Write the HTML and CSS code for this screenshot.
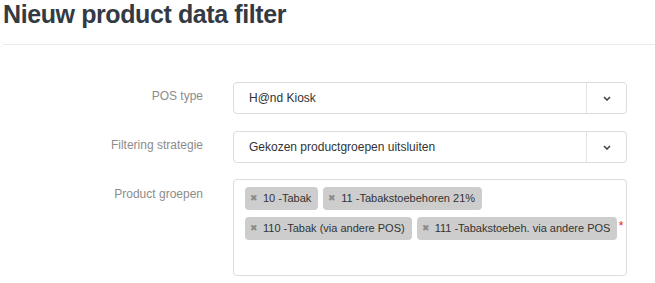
FILE: index.html
```html
<!DOCTYPE html>
<html lang="nl">

<head>
    <meta charset="UTF-8">
    <meta name="viewport" content="width=device-width, initial-scale=1.0">
    <title>Nieuw product data filter</title>
    <link rel="stylesheet" href="styles.css">
</head>

<body>
    <h1 class="page-title">Nieuw product data filter</h1>

    <form class="filter-form">
        <label class="form-label">POS type</label>
        <div class="select-box">
            <span class="select-value">H@nd Kiosk</span>
            <span class="select-toggle">
                <svg width="8" height="5" viewBox="0 0 8 5"><path d="M1 1 L4 4 L7 1" fill="none" stroke="#444" stroke-width="1.6"/></svg>
            </span>
        </div>

        <label class="form-label">Filtering strategie</label>
        <div class="select-box">
            <span class="select-value">Gekozen productgroepen uitsluiten</span>
            <span class="select-toggle">
                <svg width="8" height="5" viewBox="0 0 8 5"><path d="M1 1 L4 4 L7 1" fill="none" stroke="#444" stroke-width="1.6"/></svg>
            </span>
        </div>

        <label class="form-label">Product groepen</label>
        <div class="tag-box">
            <span class="tag"><span class="tag-remove">&#x2716;</span>10 -Tabak</span>
            <span class="tag"><span class="tag-remove">&#x2716;</span>11 -Tabakstoebehoren 21%</span>
            <span class="tag"><span class="tag-remove">&#x2716;</span>110 -Tabak (via andere POS)</span>
            <span class="tag required"><span class="tag-remove">&#x2716;</span>111 -Tabakstoebeh. via andere POS</span>
        </div>
    </form>
</body>

</html>
```
FILE: styles.css
```css
/* General */

body {
    margin: 0;
    font-family: 'Liberation Sans', Arial, sans-serif;
    color: #333;
    background: #ffffff;
}

/* Title */

.page-title {
    margin: 0 0 0 3px;
    padding: 2px 0 17px;
    font-size: 25px;
    line-height: 25px;
    letter-spacing: -0.4px;
    font-weight: bold;
    color: #343a44;
    border-bottom: 1px solid #eaeaea;
}

/* Form grid */

.filter-form {
    display: grid;
    grid-template-columns: 200px 394px;
    column-gap: 30px;
    row-gap: 17px;
    padding: 37px 0 0 3px;
}

.form-label {
    text-align: right;
    font-size: 12px;
    line-height: 17px;
    padding-top: 6px;
    color: #8c8c8c;
}

/* Select */

.select-box {
    display: flex;
    height: 32px;
    box-sizing: border-box;
    border: 1px solid #dcdcdc;
    border-radius: 4px;
}

.select-value {
    flex: 1;
    padding-left: 15px;
    font-size: 12px;
    line-height: 30px;
    color: #333;
}

.select-toggle {
    width: 39px;
    display: flex;
    align-items: center;
    justify-content: center;
    border-left: 1px solid #e3e3e3;
}

/* Tags */

.tag-box {
    display: flex;
    flex-wrap: wrap;
    align-content: flex-start;
    gap: 7px 5px;
    min-height: 97px;
    box-sizing: border-box;
    padding: 7px 6px 7px 11px;
    border: 1px solid #dcdcdc;
    border-radius: 4px;
    margin-top: -1px;
}

.tag {
    position: relative;
    height: 23px;
    line-height: 23px;
    padding: 0 7px 0 5px;
    font-size: 11px;
    color: #333;
    background: #cdcdcd;
    border-radius: 4px;
}

.tag-remove {
    font-size: 9px;
    color: #8a8a8a;
    margin-right: 5px;
    vertical-align: 1px;
}

.tag.required::after {
    content: "*";
    position: absolute;
    right: -6px;
    top: -2px;
    font-size: 12px;
    color: #e0201d;
}
```
